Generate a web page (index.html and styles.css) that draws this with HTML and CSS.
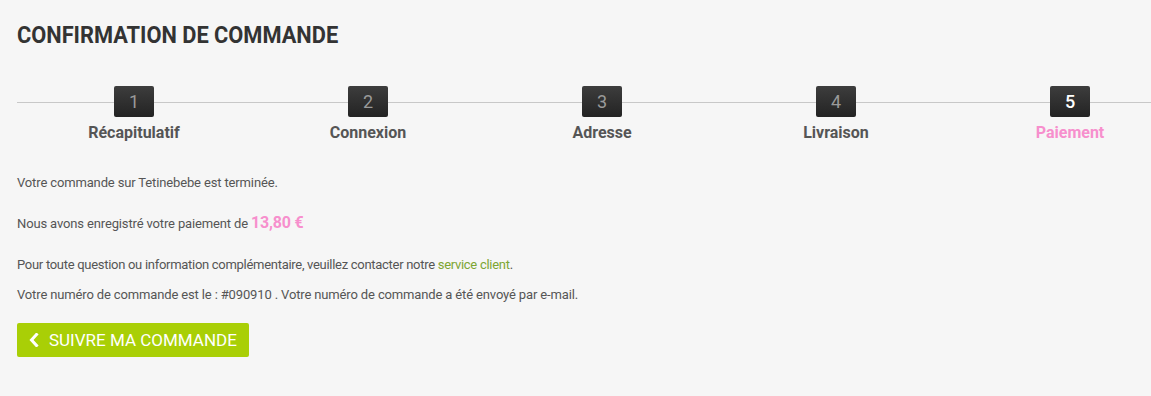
FILE: index.html
```html
<!DOCTYPE html>
<html lang="fr">
<head>
<meta charset="utf-8">
<title>Confirmation de commande</title>
<link rel="stylesheet" href="styles.css">
</head>
<body>
<div class="page">
  <h1 class="title">CONFIRMATION DE COMMANDE</h1>
  <ol class="steps">
    <li class="step"><span class="num">1</span><span class="label">Récapitulatif</span></li>
    <li class="step"><span class="num">2</span><span class="label">Connexion</span></li>
    <li class="step"><span class="num">3</span><span class="label">Adresse</span></li>
    <li class="step"><span class="num">4</span><span class="label">Livraison</span></li>
    <li class="step current"><span class="num">5</span><span class="label">Paiement</span></li>
  </ol>
  <div class="content">
    <p class="p1">Votre commande sur Tetinebebe est terminée.</p>
    <p class="p2">Nous avons enregistré votre paiement de <span class="price">13,80 €</span></p>
    <p class="p3">Pour toute question ou information complémentaire, veuillez contacter notre <a class="link" href="#">service client</a>.</p>
    <p class="p4">Votre numéro de commande est le : #090910 . Votre numéro de commande a été envoyé par e-mail.</p>
    <a class="btn" href="#"><svg class="chev" width="10" height="14" viewBox="0 0 10 14"><path d="M7.5 1.5 L2.5 7 L7.5 12.5" fill="none" stroke="#fff" stroke-width="3" stroke-linecap="square" stroke-linejoin="miter"/></svg><span>SUIVRE MA COMMANDE</span></a>
  </div>
</div>
</body>
</html>
```
FILE: styles.css
```css
html, body {
  margin: 0;
  padding: 0;
  background: #f6f6f6;
  overflow: hidden;
}
body {
  font-family: Roboto, "Liberation Sans", sans-serif;
  color: #555;
}
.page {
  width: 1170px;
  padding: 21px 0 0 17px;
}
.title {
  margin: 0;
  font-size: 24px;
  line-height: 28px;
  font-weight: 700;
  color: #333;
  transform: scaleX(0.908);
  transform-origin: left center;
  white-space: nowrap;
}
.steps {
  list-style: none;
  margin: 37px 0 0;
  padding: 0;
  display: grid;
  grid-template-columns: repeat(5, 234px);
  background: linear-gradient(#c8c8c8, #c8c8c8) no-repeat 0 16px / 100% 1px;
}
.step {
  display: flex;
  flex-direction: column;
  align-items: center;
}
.num {
  width: 40px;
  height: 31px;
  border-radius: 2px;
  background: linear-gradient(#3d3d3d, #232323);
  color: #9a9a9a;
  font-size: 18px;
  line-height: 31px;
  text-align: center;
}
.label {
  margin-top: 6px;
  font-size: 16px;
  line-height: 19px;
  font-weight: 700;
  color: #555;
}
.current .num { color: #fff; font-weight: 500; }
.current .label { color: #f78fcd; }
.content {
  padding-top: 32px;
}
.content p {
  margin: 0;
  font-size: 13px;
  line-height: 18px;
  color: #555;
  letter-spacing: -0.14px;
}
.content .p3 { letter-spacing: -0.29px; }
.p1 { margin-bottom: 22px !important; }
.p2 { margin-bottom: 23px !important; }
.p3 { margin-bottom: 12px !important; }
.p4 { margin-bottom: 19px !important; }
.price {
  font-size: 16px;
  font-weight: 700;
  color: #f78fcd;
  line-height: 18px;
  letter-spacing: -0.2px;
}
.link {
  color: #7da532;
  text-decoration: none;
}
.btn {
  display: inline-flex;
  align-items: center;
  gap: 10px;
  height: 34px;
  padding: 0 12px;
  box-sizing: border-box;
  width: 232px;
  background: #a9cf06;
  border-radius: 2px;
  color: #fff;
  text-decoration: none;
  font-size: 17px;
  font-weight: 400;
}
.chev { flex: none; }
```
